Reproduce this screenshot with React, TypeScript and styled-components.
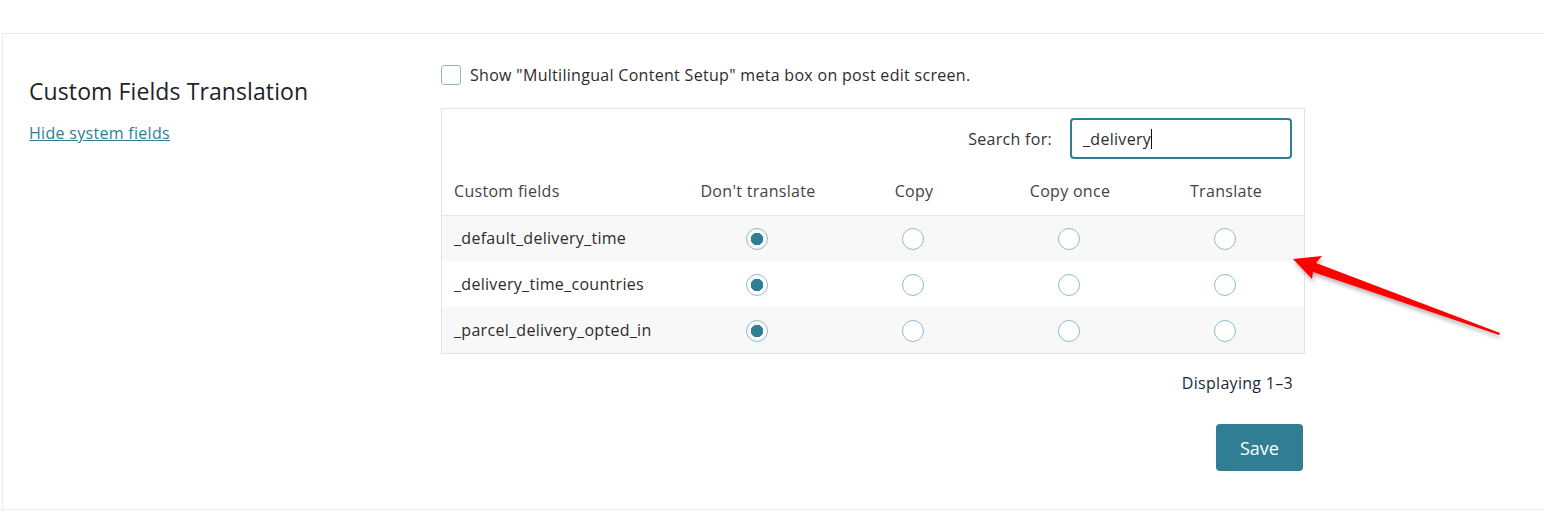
import React from 'react';
import styled, { createGlobalStyle } from 'styled-components';

const GlobalStyle = createGlobalStyle`
  body {
    margin: 0;
    background: #ffffff;
    font-family: "Open Sans", "Noto Sans", sans-serif;
    color: #1e1e1e;
    letter-spacing: 0.3px;
  }
`;

const fields = ['_default_delivery_time', '_delivery_time_countries', '_parcel_delivery_opted_in'];
const options = ["Don't translate", 'Copy', 'Copy once', 'Translate'];

const App = () => {
  return (
    <Page>
      <GlobalStyle />
      <Card>
        <Side>
          <Title>Custom Fields Translation</Title>
          <SideLink href="#">Hide system fields</SideLink>
        </Side>

        <Main>
          <CheckRow>
            <Checkbox />
            <span>Show "Multilingual Content Setup" meta box on post edit screen.</span>
          </CheckRow>

          <TableBox>
            <SearchRow>
              <SearchLabel>Search for:</SearchLabel>
              <SearchInput>
                _delivery<Caret />
              </SearchInput>
            </SearchRow>

            <FieldsTable>
              <colgroup>
                <col style={{ width: 238 }} />
                <col />
                <col />
                <col />
                <col />
              </colgroup>
              <thead>
                <tr>
                  <HeadCell $left>Custom fields</HeadCell>
                  {options.map((o) => (
                    <HeadCell key={o}>{o}</HeadCell>
                  ))}
                </tr>
              </thead>
              <tbody>
                {fields.map((f, i) => (
                  <Row key={f} $striped={i % 2 === 0}>
                    <NameCell>{f}</NameCell>
                    {options.map((o, j) => (
                      <RadioCell key={o}>
                        <Radio $checked={j === 0} />
                      </RadioCell>
                    ))}
                  </Row>
                ))}
              </tbody>
            </FieldsTable>
          </TableBox>

          <Footer>
            <Counter>Displaying 1–3</Counter>
            <SaveButton>Save</SaveButton>
          </Footer>
        </Main>
      </Card>

      <Arrow width="260" height="110" viewBox="0 0 260 110">
        <defs>
          <filter id="sh" x="-20%" y="-40%" width="140%" height="180%">
            <feDropShadow dx="1" dy="3" stdDeviation="2" floodColor="#000" floodOpacity="0.3" />
          </filter>
        </defs>
        <polygon
          points="3,29 32,26 26,33 210,103 209,105 23,42 22,49"
          fill="#ff0000"
          filter="url(#sh)"
        />
      </Arrow>
    </Page>
  );
};

const Page = styled.div`
  position: relative;
  height: 528px;
  padding-top: 33px;
  box-sizing: border-box;
  overflow: hidden;
`;

const Card = styled.section`
  margin-left: 2px;
  height: 477px;
  box-sizing: border-box;
  border: 1px solid #ebebeb;
  border-right: none;
  display: grid;
  grid-template-columns: 412px 864px;
  padding: 29px 0 0 26px;
`;

const Side = styled.div`
  padding-top: 12px;
`;

const Title = styled.h2`
  margin: 0 0 15px;
  font-size: 23px;
  font-weight: 400;
  line-height: 32px;
  letter-spacing: 0.1px;
  color: #1d2327;
`;

const SideLink = styled.a`
  font-size: 16px;
  color: #2f7e93;
  text-decoration: underline;
`;

const Main = styled.div`
  display: flex;
  flex-direction: column;
`;

const CheckRow = styled.label`
  display: flex;
  align-items: center;
  gap: 9px;
  height: 24px;
  font-size: 16px;
  color: #2c2c2c;
`;

const Checkbox = styled.span`
  width: 20px;
  height: 20px;
  box-sizing: border-box;
  border: 1px solid #8fb6c4;
  border-radius: 3px;
`;

const TableBox = styled.div`
  margin-top: 21px;
  border: 1px solid #e2e2e2;
  box-sizing: border-box;
`;

const SearchRow = styled.div`
  display: flex;
  justify-content: flex-end;
  align-items: center;
  gap: 18px;
  padding: 9px 12px 0 0;
`;

const SearchLabel = styled.span`
  font-size: 16px;
  color: #333;
`;

const SearchInput = styled.div`
  width: 222px;
  height: 41px;
  box-sizing: border-box;
  border: 2px solid #2f7e93;
  border-radius: 4px;
  display: flex;
  align-items: center;
  padding-left: 11px;
  font-size: 16px;
  color: #2c2c2c;
`;

const Caret = styled.span`
  display: inline-block;
  width: 1px;
  height: 20px;
  background: #111;
`;

const FieldsTable = styled.table`
  width: 100%;
  border-collapse: collapse;
  table-layout: fixed;
`;

const HeadCell = styled.th<{ $left?: boolean }>`
  height: 56px;
  padding: 9px 0 0 ${(p) => (p.$left ? '12px' : '0')};
  text-align: ${(p) => (p.$left ? 'left' : 'center')};
  font-size: 16px;
  font-weight: 400;
  color: #444;
  border-bottom: 1px solid #e6e6e6;
  box-sizing: border-box;
`;

const Row = styled.tr<{ $striped: boolean }>`
  height: 46px;
  background: ${(p) => (p.$striped ? '#f8f8f8' : '#ffffff')};
`;

const NameCell = styled.td`
  padding-left: 12px;
  font-size: 16px;
  color: #2c2c2c;
`;

const RadioCell = styled.td`
  text-align: center;
  padding-right: 4px;
`;

const Radio = styled.span<{ $checked: boolean }>`
  display: inline-block;
  vertical-align: middle;
  width: 22px;
  height: 22px;
  box-sizing: border-box;
  border-radius: 50%;
  border: 1.5px solid #8fbccb;
  background: ${(p) =>
    p.$checked ? 'radial-gradient(circle, #2f7e93 0 6px, transparent 6.5px)' : '#fff'};
`;

const Footer = styled.div`
  display: flex;
  flex-direction: column;
  align-items: flex-end;
  width: 862px;
`;

const Counter = styled.div`
  margin-top: 18px;
  padding-right: 10px;
  font-size: 16px;
  color: #1d2a3a;
`;

const SaveButton = styled.button`
  margin-top: 30px;
  width: 87px;
  height: 47px;
  border: none;
  border-radius: 4px;
  background: #2f7e93;
  color: #fff;
  font-family: inherit;
  font-size: 18px;
`;

const Arrow = styled.svg`
  position: absolute;
  left: 1290px;
  top: 230px;
`;

export default App;
